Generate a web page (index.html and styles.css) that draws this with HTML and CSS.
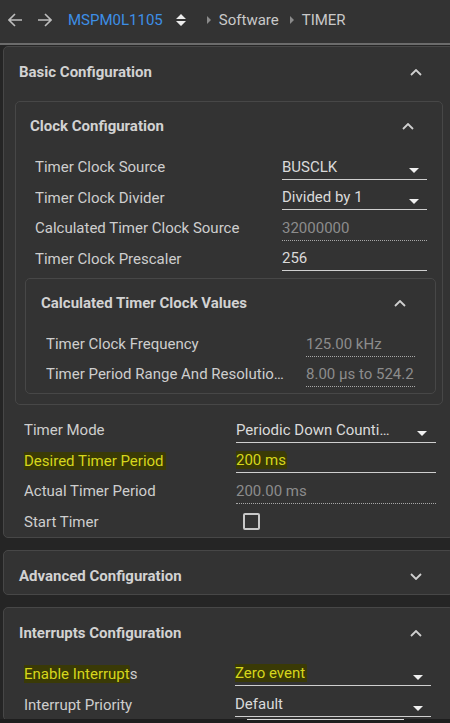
FILE: index.html
```html
<!DOCTYPE html>
<html lang="en">
<head>
    <meta charset="UTF-8">
    <title>TIMER configuration</title>
    <link rel="stylesheet" href="styles.css">
</head>
<body>
<header class="topbar">
    <svg class="nav-arrow" width="15" height="14" viewBox="0 0 15 14"><path d="M14 7H1.5M7 1L1 7l6 6" fill="none" stroke="#bdbdbd" stroke-width="1.6"/></svg>
    <svg class="nav-arrow fwd" width="15" height="14" viewBox="0 0 15 14"><path d="M1 7h12.5M8 1l6 6-6 6" fill="none" stroke="#bdbdbd" stroke-width="1.6"/></svg>
    <span class="device">MSPM0L1105</span>
    <svg class="updown" width="10" height="12" viewBox="0 0 10 12"><path d="M0 5L5 0l5 5zM0 7h10l-5 5z" fill="#ececec"/></svg>
    <span class="crumb-sep first"></span>
    <span class="crumb">Software</span>
    <span class="crumb-sep"></span>
    <span class="crumb">TIMER</span>
</header>

<main class="content">
    <section class="panel">
        <div class="panel-head">
            <h2>Basic Configuration</h2>
            <svg class="chev" width="12" height="7" viewBox="0 0 12 7"><path d="M1 6l5-5 5 5" fill="none" stroke="#d0d0d0" stroke-width="1.8"/></svg>
        </div>
        <div class="panel-body">
            <section class="panel sub">
                <div class="panel-head sub-head">
                    <h2>Clock Configuration</h2>
                    <svg class="chev" width="12" height="7" viewBox="0 0 12 7"><path d="M1 6l5-5 5 5" fill="none" stroke="#d0d0d0" stroke-width="1.8"/></svg>
                </div>
                <div class="rows rows-clock">
                    <div class="row">
                        <span class="label">Timer Clock Source</span>
                        <span class="field"><span class="val">BUSCLK</span><i class="drop"></i></span>
                    </div>
                    <div class="row">
                        <span class="label">Timer Clock Divider</span>
                        <span class="field"><span class="val">Divided by 1</span><i class="drop"></i></span>
                    </div>
                    <div class="row">
                        <span class="label">Calculated Timer Clock Source</span>
                        <span class="field ro"><span class="val">32000000</span></span>
                    </div>
                    <div class="row">
                        <span class="label">Timer Clock Prescaler</span>
                        <span class="field"><span class="val">256</span></span>
                    </div>
                </div>

                <section class="panel calc">
                    <div class="panel-head sub-head calc-head">
                        <h2>Calculated Timer Clock Values</h2>
                        <svg class="chev" width="12" height="7" viewBox="0 0 12 7"><path d="M1 6l5-5 5 5" fill="none" stroke="#d0d0d0" stroke-width="1.8"/></svg>
                    </div>
                    <div class="rows rows-calc">
                        <div class="row r30">
                            <span class="label">Timer Clock Frequency</span>
                            <span class="field ro"><span class="val">125.00 kHz</span></span>
                        </div>
                        <div class="row r30">
                            <span class="label" title="Timer Period Range And Resolution">Timer Period Range And Resolutio…</span>
                            <span class="field ro"><span class="val">8.00 µs to 524.2</span></span>
                        </div>
                    </div>
                </section>
            </section>

            <div class="rows rows-outer">
                <div class="row">
                    <span class="label">Timer Mode</span>
                    <span class="field"><span class="val">Periodic Down Counti…</span><i class="drop wide"></i></span>
                </div>
                <div class="row">
                    <span class="label"><mark class="hl">Desired Timer Period</mark></span>
                    <span class="field"><span class="val"><mark class="hl tight">200 ms</mark></span></span>
                </div>
                <div class="row">
                    <span class="label">Actual Timer Period</span>
                    <span class="field ro"><span class="val">200.00 ms</span></span>
                </div>
                <div class="row">
                    <span class="label">Start Timer</span>
                    <span class="field bare"><span class="check"></span></span>
                </div>
            </div>
        </div>
    </section>

    <section class="panel closed">
        <div class="panel-head short">
            <h2>Advanced Configuration</h2>
            <svg class="chev" width="12" height="7" viewBox="0 0 12 7"><path d="M1 1l5 5 5-5" fill="none" stroke="#d0d0d0" stroke-width="1.8"/></svg>
        </div>
    </section>

    <section class="panel">
        <div class="panel-head int-head">
            <h2>Interrupts Configuration</h2>
            <svg class="chev" width="12" height="7" viewBox="0 0 12 7"><path d="M1 6l5-5 5 5" fill="none" stroke="#d0d0d0" stroke-width="1.8"/></svg>
        </div>
        <div class="rows rows-int">
            <div class="row">
                <span class="label"><mark class="hl end">Enable Interrupt</mark>s</span>
                <span class="field"><span class="val"><mark class="hl">Zero event</mark></span><i class="drop"></i></span>
            </div>
            <div class="row">
                <span class="label">Interrupt Priority</span>
                <span class="field"><span class="val">Default</span><i class="drop"></i></span>
            </div>
        </div>
    </section>
</main>

<div class="hscroll"><span class="thumb"></span></div>
</body>
</html>
```

FILE: styles.css
```css
*{
    margin:0;
    padding:0;
    box-sizing:border-box;
}
body{
    width:450px;
    height:723px;
    overflow:hidden;
    background:#252525;
    font-family:Roboto, "Liberation Sans", sans-serif;
    font-size:15px;
    color:#cecece;
}

/* top bar */
.topbar{
    height:45px;
    background:#333;
    border-bottom:2px solid #6c6c6c;
    display:flex;
    align-items:center;
    padding:0 0 3px 8px;
    font-size:15px;
}
.nav-arrow.fwd{
    margin-left:14px;
}
.device{
    color:#3d8fe6;
    margin-left:16px;
}
.updown{
    margin-left:13px;
}
.crumb-sep{
    width:0;
    height:0;
    border-top:4px solid transparent;
    border-bottom:4px solid transparent;
    border-left:4px solid #8a8a8a;
    margin:0 8px 0 11px;
}
.crumb-sep.first{
    margin-left:21px;
}
.crumb{
    color:#c9c9c9;
}

/* panels */
.content{
    width:451px;
    margin-left:3px;
    padding-top:1px;
}
.panel{
    background:#333;
    border:1px solid #474747;
    border-radius:5px;
}
.panel + .panel{
    margin-top:12px;
}
.panel-head{
    height:50px;
    display:flex;
    align-items:center;
    justify-content:space-between;
    padding:0 31px 0 15px;
}
.panel-head h2{
    font-size:15px;
    font-weight:700;
    color:#d2d2d2;
}
.panel-body{
    padding:4px 0 0 11px;
}
.sub{
    width:428px;
    padding-bottom:10px;
}
.sub-head{
    height:48px;
    padding:0 28px 0 14px;
}
.calc{
    width:411px;
    margin:4px 0 0 9px;
    padding-bottom:4px;
}
.calc-head{
    padding:0 29px 0 15px;
}
.short{
    height:43px;
    padding-top:7px;
}
.int-head{
    height:48px;
    padding-top:2px;
}

/* rows */
.rows{
    padding-top:2px;
}
.row{
    display:flex;
    align-items:center;
    height:30.5px;
}
.row.r30{
    height:30px;
}
.label{
    white-space:nowrap;
    overflow:hidden;
}
.rows-clock{
    padding-left:19px;
}
.rows-clock .label{
    width:247px;
}
.rows-clock .field{
    width:145px;
}
.rows-calc{
    padding-left:20px;
}
.rows-calc .label{
    width:260px;
}
.rows-calc .field{
    width:109px;
}
.rows-outer{
    padding:10px 0 0 9px;
}
.rows-outer .label{
    width:212px;
}
.rows-outer .field{
    width:200px;
}
.rows-int{
    padding-left:20px;
}
.rows-int .row{
    height:31px;
}
.rows-int .label{
    width:211px;
}
.rows-int .field{
    width:196px;
}

.field{
    height:25px;
    display:flex;
    align-items:center;
    border-bottom:1px solid #cfcfcf;
    color:#dadada;
}
.field.ro{
    border-bottom:1px dotted #a8a8a8;
    color:#8c8c8c;
}
.field.bare{
    border-bottom:none;
}
.val{
    flex:1;
    min-width:0;
    white-space:nowrap;
    overflow:hidden;
}
.drop{
    width:0;
    height:0;
    border-left:5px solid transparent;
    border-right:5px solid transparent;
    border-top:5px solid #f0f0f0;
    margin:8px 8px 0 10px;
}
.drop.wide{
    margin:8px 9px 0 22px;
}
.check{
    width:17px;
    height:17px;
    border:2px solid #c8c8c8;
    border-radius:2px;
    margin-left:7px;
}

/* marker highlight */
.hl{
    background:#3a3a06;
    color:#d6d61c;
    padding:3px 2px 3px 6px;
    margin-left:-6px;
    border-radius:2px 6px 3px 2px;
}
.hl.end{
    padding-right:0;
}
.hl.tight{
    padding:1px 1px;
    margin-left:-1px;
}

/* horizontal scrollbar at the bottom edge */
.hscroll{
    position:fixed;
    left:0;
    right:0;
    bottom:0;
    height:4px;
    background:#1e1e1e;
}
.thumb{
    position:absolute;
    left:247px;
    top:0;
    width:157px;
    height:1px;
    background:#dcdcdc;
}
```
